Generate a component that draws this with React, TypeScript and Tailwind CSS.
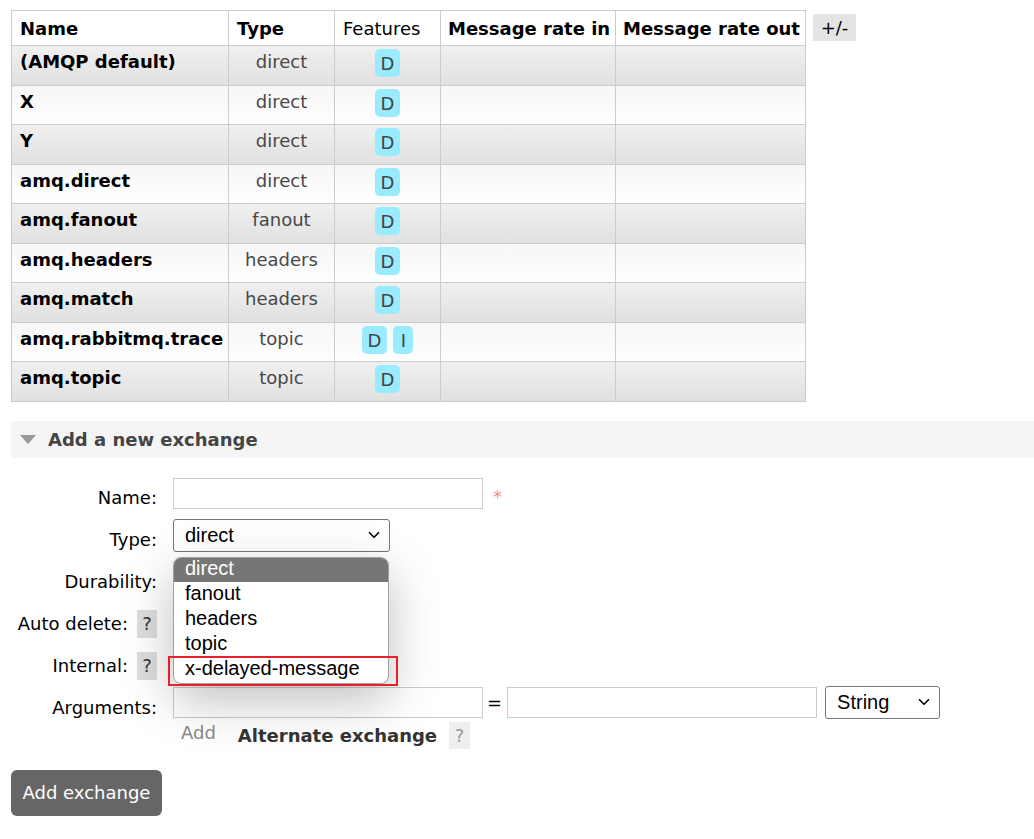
import { ChevronDown } from 'lucide-react';

const exchanges = [
  { name: '(AMQP default)', type: 'direct', features: ['D'] },
  { name: 'X', type: 'direct', features: ['D'] },
  { name: 'Y', type: 'direct', features: ['D'] },
  { name: 'amq.direct', type: 'direct', features: ['D'] },
  { name: 'amq.fanout', type: 'fanout', features: ['D'] },
  { name: 'amq.headers', type: 'headers', features: ['D'] },
  { name: 'amq.match', type: 'headers', features: ['D'] },
  { name: 'amq.rabbitmq.trace', type: 'topic', features: ['D', 'I'] },
  { name: 'amq.topic', type: 'topic', features: ['D'] },
];

const options = ['direct', 'fanout', 'headers', 'topic', 'x-delayed-message'];

function Help({ muted }: { muted?: boolean }) {
  return (
    <span
      className={
        muted
          ? 'inline-flex h-[27px] w-[21px] items-center justify-center bg-[#eeeeee] text-[#999]'
          : 'inline-flex h-[28px] w-[20px] items-center justify-center bg-[#dddddd] text-[#333]'
      }
    >
      ?
    </span>
  );
}

function Label({ text, help }: { text: string; help?: boolean }) {
  return (
    <div className="ml-[11px] flex h-[42px] w-[146px] items-center justify-end gap-[9px]">
      <span>{text}</span>
      {help && <Help />}
    </div>
  );
}

export default function App() {
  return (
    <div className="relative min-h-[839px] w-[1034px] overflow-hidden bg-white font-['DejaVu_Sans',sans-serif] text-[18px] text-black">
      {/* exchanges table */}
      <div className="flex items-start gap-[7px] pl-[11px] pt-[10px]">
        <table className="w-[794px] table-fixed border-collapse">
          <colgroup>
            <col className="w-[217px]" />
            <col className="w-[106px]" />
            <col className="w-[106px]" />
            <col className="w-[175px]" />
            <col className="w-[190px]" />
          </colgroup>
          <thead>
            <tr className="h-[35px]">
              <th className="whitespace-nowrap border border-[#cccccc] pl-[8px] text-left font-bold">Name</th>
              <th className="whitespace-nowrap border border-[#cccccc] pl-[8px] text-left font-bold">Type</th>
              <th className="whitespace-nowrap border border-[#cccccc] pl-[8px] text-left font-normal">Features</th>
              <th className="whitespace-nowrap border border-[#cccccc] pl-[7px] text-left font-bold">Message rate in</th>
              <th className="whitespace-nowrap border border-[#cccccc] pl-[7px] text-left font-bold">Message rate out</th>
            </tr>
          </thead>
          <tbody>
            {exchanges.map((ex, i) => (
              <tr
                key={ex.name}
                className={
                  i % 2 === 0
                    ? 'h-[39.5px] bg-gradient-to-b from-[#f0f0f0] to-[#e0e0e0]'
                    : 'h-[39.5px] bg-gradient-to-b from-[#f6f6f6] to-[#ffffff]'
                }
              >
                <td className="whitespace-nowrap border border-[#cccccc] pl-[8px] pt-[2px] align-top font-bold leading-[28px]">{ex.name}</td>
                <td className="border border-[#cccccc] px-[4px] pt-[2px] text-center align-top leading-[28px] text-[#484848]">
                  {ex.type}
                </td>
                <td className="border border-[#cccccc] px-[4px] pt-[3px] text-center align-top leading-[22px]">
                  <div className="flex justify-center gap-[6px]">
                    {ex.features.map((f) => (
                      <span
                        key={f}
                        className="inline-block min-w-[20px] rounded-[5px] bg-[#99ebff] px-[6px] pb-[2px] pt-[4px] text-center text-[#444]"
                      >
                        {f}
                      </span>
                    ))}
                  </div>
                </td>
                <td className="border border-[#cccccc]" />
                <td className="border border-[#cccccc]" />
              </tr>
            ))}
          </tbody>
        </table>
        <span className="mt-[4px] flex h-[27px] w-[43px] items-center justify-center bg-[#e4e4e4]">+/-</span>
      </div>

      {/* add section header */}
      <div className="ml-[11px] mt-[19px] flex h-[37px] items-center gap-[12px] bg-[#f5f5f5] pl-[9px] font-bold text-[#444]">
        <svg width="16" height="9" viewBox="0 0 16 9">
          <path d="M0 0 H16 L8 9 Z" fill="#999" />
        </svg>
        <span>Add a new exchange</span>
      </div>

      {/* form */}
      <div className="mt-[19px] flex flex-col">
        <div className="flex h-[42px] items-start gap-[16px]">
          <Label text="Name:" />
          <input className="mt-[1px] h-[31px] w-[310px] border border-[#cccccc]" />
          <span className="-ml-[6px] mt-[6px] text-[#f88]">*</span>
        </div>

        <div className="flex h-[42px] items-start gap-[16px]">
          <Label text="Type:" />
          <div className="relative">
            <div className="flex h-[33px] w-[217px] items-center justify-between rounded-[3px] border border-[#767676] pl-[11px] pr-[6px] font-['Liberation_Sans',sans-serif] text-[20px]">
              <span>direct</span>
              <ChevronDown size={18} strokeWidth={2.2} />
            </div>

            {/* open list */}
            <div className="absolute left-0 top-[38px] z-10 flex h-[127px] w-[216px] flex-col overflow-hidden rounded-[8px] border border-[#a0a0a0] bg-white font-['Liberation_Sans',sans-serif] text-[20px] leading-[25px] shadow-[0_16px_50px_rgba(0,0,0,0.26)]">
              {options.map((o, i) => (
                <div key={o} className={i === 0 ? 'h-[24px] bg-[#767676] pl-[11px] leading-[21px] text-white' : 'h-[25px] pl-[11px] leading-[23px]'}>
                  {o}
                </div>
              ))}
            </div>
            <div className="absolute left-[-5px] top-[137px] z-20 h-[30px] w-[230px] border-[2.5px] border-[#e8202b]" />
          </div>
        </div>

        <div className="flex h-[42px] items-start gap-[16px]">
          <Label text="Durability:" />
        </div>
        <div className="flex h-[42px] items-start gap-[16px]">
          <Label text="Auto delete:" help />
        </div>
        <div className="flex h-[42px] items-start gap-[16px]">
          <Label text="Internal:" help />
        </div>

        <div className="flex h-[42px] items-start gap-[16px]">
          <Label text="Arguments:" />
          <div className="-mt-[1px] flex items-center">
            <input className="h-[31px] w-[310px] border border-[#cccccc]" />
            <span className="ml-[4px] mr-[5px]">=</span>
            <input className="h-[31px] w-[310px] border border-[#cccccc]" />
            <div className="ml-[8px] flex h-[33px] w-[115px] items-center justify-between rounded-[3px] border border-[#767676] pl-[11px] pr-[6px] font-['Liberation_Sans',sans-serif] text-[20px]">
              <span>String</span>
              <ChevronDown size={18} strokeWidth={2.2} />
            </div>
          </div>
        </div>

        <div className="-mt-[10px] ml-[181px] flex h-[33px] items-center gap-[12px]">
          <span className="-mt-[5px] text-[#888]">Add</span>
          <span className="ml-[10px] font-bold text-[#333]">Alternate exchange</span>
          <Help muted />
        </div>

        <div className="ml-[11px] mt-[18px]">
          <button className="h-[46px] w-[151px] rounded-[6px] bg-[#666666] text-white">Add exchange</button>
        </div>
      </div>
    </div>
  );
}
